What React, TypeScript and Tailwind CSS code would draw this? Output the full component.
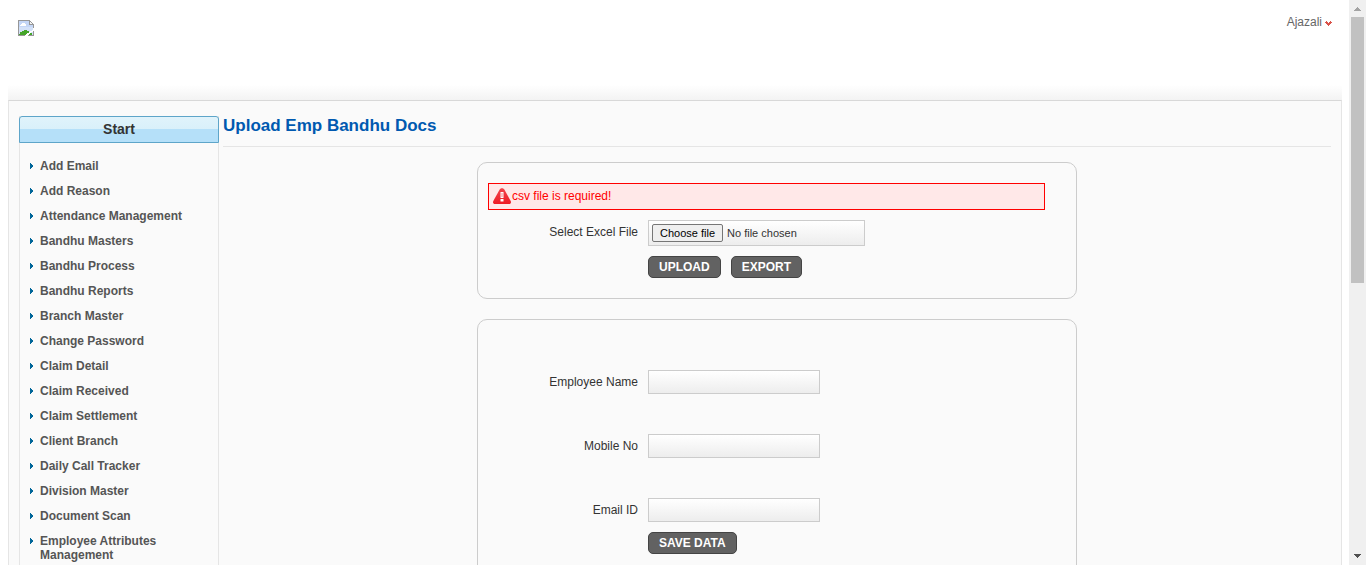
import { useState } from 'react';

const menuItems = [
  'Add Email',
  'Add Reason',
  'Attendance Management',
  'Bandhu Masters',
  'Bandhu Process',
  'Bandhu Reports',
  'Branch Master',
  'Change Password',
  'Claim Detail',
  'Claim Received',
  'Claim Settlement',
  'Client Branch',
  'Daily Call Tracker',
  'Division Master',
  'Document Scan',
  'Employee Attributes Management',
];

const textFields = [
  { id: 'employee-name', label: 'Employee Name' },
  { id: 'mobile-no', label: 'Mobile No' },
  { id: 'email-id', label: 'Email ID' },
];

function BrokenImageIcon() {
  return (
    <svg width="16" height="16" viewBox="0 0 16 16" role="img" aria-label="Logo" shapeRendering="crispEdges">
      <path d="M0 0h12v1h1v1h1v1h1v1h1v12H0z" fill="#979797" />
      <path d="M1 1h10v4h4v10H1z" fill="#c4d6f6" />
      <path d="M1 7h14v8H1z" fill="#d3e1f8" />
      <path d="M12 2h1v1h1v1h-2z" fill="#f4f4f4" />
      <path d="M2 5h1V4h1V3h3v1h1v2H2z" fill="#fff" />
      <path d="M1 15v-1h1v-2h2v-1h2v-1h3v1h2v1h2v1h1v2z" fill="#46a62a" />
      <path d="M16 8v3h-1v1h-2v1h-1v1h-1v1h-1v1H7v-1h1v-1h1v-1h2v-1h1v-1h2v-1h1V8z" fill="#fff" />
    </svg>
  );
}

function WarningIcon() {
  return (
    <svg width="18" height="16" viewBox="0 0 18 16" aria-hidden="true" className="shrink-0">
      <defs>
        <linearGradient id="warning-fill" x1="0" y1="0" x2="0" y2="1">
          <stop offset="0" stopColor="#f2444c" />
          <stop offset="1" stopColor="#ee1c25" />
        </linearGradient>
      </defs>
      <path
        d="M6.800 1.300C7.700-.2 10.300-.2 11.200 1.300l6.500 11.700c.7 1.500 0 3-1.700 3H2c-1.700 0-2.400-1.500-1.700-3z"
        fill="url(#warning-fill)"
      />
      <path d="M7.500 4h3v6h-3zM7.500 11h3v2.500h-3z" fill="#fff" />
      <path d="M8.500 5h1v4h-1z" fill="#f4868b" />
    </svg>
  );
}

function ActionButton({ children }: { children: string }) {
  return (
    <button
      type="button"
      className="h-[22px] rounded-[5px] border border-[#444] bg-[#626262] px-2.5 text-xs font-bold leading-4 text-white"
    >
      {children}
    </button>
  );
}

function Sidebar() {
  return (
    <nav className="w-[200px] shrink-0 border-x border-[#e5e5e5]">
      <h2 className="-mx-px h-[27px] rounded-t-[3px] border border-[#5ea5c9] bg-[linear-gradient(to_bottom,#e0f3fb_0%,#d9f0fa_50%,#b5e0f9_50%,#b5e0f9_100%)] text-center text-sm font-bold leading-[25px] text-[#333]">
        Start
      </h2>
      <ul className="pt-4">
        {menuItems.map((item) => (
          <li key={item} className="mb-[11px] flex px-2.5 text-xs font-bold leading-[14px] text-[#555]">
            <svg width="10" height="14" viewBox="0 0 10 14" aria-hidden="true" shapeRendering="crispEdges" className="shrink-0">
              <path d="M0 4h1v1h1v1h1v2H2v1H1v1H0z" fill="#006699" />
            </svg>
            <a href="#" className="min-w-0">{item}</a>
          </li>
        ))}
      </ul>
    </nav>
  );
}

function UploadCard() {
  const [fileName, setFileName] = useState('No file chosen');
  return (
    <section className="rounded-[10px] border border-[#ccc] px-2.5 py-5">
      <div role="alert" className="mr-[21px] flex h-[27px] items-start border border-[#f00] bg-[#ffe8e8] pl-1 pt-1 text-xs text-[#f00]">
        <WarningIcon />
        <span className="pl-px">csv file is required!</span>
      </div>
      <div className="mt-2.5 flex gap-2.5">
        <label htmlFor="excel-file" className="w-[150px] pt-1 text-right text-xs text-[#333]">
          Select Excel File
        </label>
        <label
          htmlFor="excel-file"
          className="relative flex h-[26px] w-[217px] items-center gap-1 border border-[#ccc] bg-linear-to-b from-white to-[#ededed] px-[3px] text-[11px] text-[#333]"
        >
          <input
            id="excel-file"
            type="file"
            className="sr-only"
            onChange={(e) => setFileName(e.target.files?.[0]?.name ?? 'No file chosen')}
          />
          <span className="h-[18px] rounded-[2px] border border-[#767676] bg-[#efefef] px-[7px] leading-4 text-black">
            Choose file
          </span>
          <span className="truncate">{fileName}</span>
        </label>
      </div>
      <div className="mt-2.5 flex gap-2.5 pl-[160px]">
        <ActionButton>UPLOAD</ActionButton>
        <ActionButton>EXPORT</ActionButton>
      </div>
    </section>
  );
}

function EmployeeCard() {
  return (
    <section className="mt-5 rounded-[10px] border border-[#ccc] px-2.5 pb-5 pt-[50px]">
      <form>
        <div className="flex flex-col gap-10">
          {textFields.map((field) => (
            <div key={field.id} className="flex gap-2.5">
              <label htmlFor={field.id} className="w-[150px] pt-1 text-right text-xs text-[#333]">
                {field.label}
              </label>
              <input
                id={field.id}
                type="text"
                className="h-6 w-[172px] border border-[#ccc] bg-linear-to-b from-white to-[#ededed] px-1 text-xs text-[#333]"
              />
            </div>
          ))}
        </div>
        <div className="mt-2.5 flex pl-[160px]">
          <ActionButton>SAVE DATA</ActionButton>
        </div>
      </form>
    </section>
  );
}

function Scrollbar() {
  return (
    <div aria-hidden="true" className="flex w-[17px] shrink-0 flex-col bg-[#f0f0f0]">
      <svg width="17" height="17" viewBox="0 0 17 17" shapeRendering="crispEdges" className="shrink-0">
        <path d="M8 7h1v1h1v1h1v1h1v1H5v-1h1V9h1V8h1z" fill="#a3a3a3" />
      </svg>
      <div className="min-h-0 flex-1">
        <div className="mx-0.5 h-1/2 bg-[#c1c1c1]" />
      </div>
      <svg width="17" height="17" viewBox="0 0 17 17" shapeRendering="crispEdges" className="shrink-0">
        <path d="M5 6h7v1h-1v1h-1v1H9v1H8V9H7V8H6V7H5z" fill="#505050" />
      </svg>
    </div>
  );
}

export default function App() {
  return (
    <div className="flex h-screen overflow-hidden bg-white font-['Liberation_Sans',Arial,sans-serif]">
      <div className="flex min-w-0 flex-1 flex-col pl-2 pr-[7px]">
        <header className="flex h-[100px] shrink-0 items-start justify-between bg-[linear-gradient(to_top,#f3f3f3,#fff_15px)] px-2.5">
          <div className="pt-5">
            <BrokenImageIcon />
          </div>
          <button type="button" className="flex items-center gap-[3px] pt-3.5 text-xs leading-4 text-[#666]">
            Ajazali
            <svg width="7" height="5" viewBox="0 0 7 5" aria-hidden="true" shapeRendering="crispEdges" className="mt-0.5">
              <path d="M1 0h1v1h1v1h1V1h1V0h1v1h1v1H6v1H5v1H4v1H3V4H2V3H1V2H0V1h1z" fill="#d9534a" />
            </svg>
          </button>
        </header>
        <div className="flex flex-1 gap-1 border border-b-0 border-[#e5e5e5] border-t-[#d8d8d8] bg-[#fafafa] px-2.5 pt-[15px]">
          <Sidebar />
          <main className="min-w-0 flex-1">
            <h1 className="h-[31px] border-b border-[#e5e5e5] text-[17px] font-bold leading-5 text-[#0059b0]">
              Upload Emp Bandhu Docs
            </h1>
            <div className="mx-auto mt-[15px] max-w-[600px]">
              <UploadCard />
              <EmployeeCard />
            </div>
          </main>
        </div>
      </div>
      <Scrollbar />
    </div>
  );
}
